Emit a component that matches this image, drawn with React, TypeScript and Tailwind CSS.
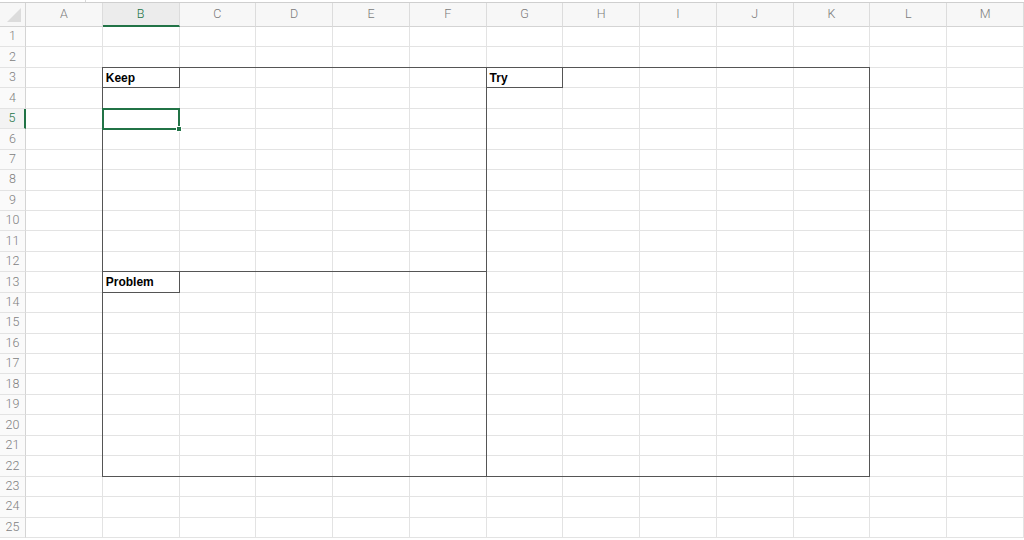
import React from 'react';

const columns = ['A', 'B', 'C', 'D', 'E', 'F', 'G', 'H', 'I', 'J', 'K', 'L', 'M'];
const rows = Array.from({ length: 25 }, (_, i) => i + 1);

const gridTemplate =
  'grid grid-cols-[26px_repeat(13,minmax(0,1fr))] grid-rows-[24px_repeat(25,20.45px)]';

function CornerCell() {
  return (
    <div className="bg-[#f7f7f7] border-r border-b border-[#d4d4d4] flex items-end justify-end pr-[4px] pb-[4px]">
      <svg width="14" height="14" viewBox="0 0 14 14">
        <polygon points="14,0 14,14 0,14" fill="#dcdcdc" />
      </svg>
    </div>
  );
}

function ColumnHeader({ label }: { label: string }) {
  const active = label === 'B';
  return (
    <div
      className={`flex items-center justify-center text-[12.5px] font-light border-r border-b ${
        active
          ? 'bg-[#ececec] text-[#217346] border-r-[#dcdcdc] border-b-2 border-b-[#217346]'
          : 'bg-[#f7f7f7] text-[#7a7a7a] border-[#dcdcdc] border-b-[#d4d4d4]'
      }`}
    >
      {label}
    </div>
  );
}

function RowHeader({ n }: { n: number }) {
  const active = n === 5;
  return (
    <div
      className={`flex items-center justify-center text-[12.5px] font-light border-b border-[#e3e3e3] ${
        active
          ? 'bg-[#f3f3f3] text-[#217346] border-r-2 border-r-[#217346]'
          : 'bg-[#fafafa] text-[#808080] border-r border-r-[#d4d4d4]'
      }`}
    >
      {n}
    </div>
  );
}

function Label({ text }: { text: string }) {
  return (
    <div className="-mt-px -ml-px border border-[#555] flex items-center pl-[3px] font-['Liberation_Sans',Arial,sans-serif] text-[12px] font-bold text-black leading-none">
      {text}
    </div>
  );
}

export default function App() {
  return (
    <div className="w-[1024px] h-[540px] overflow-hidden bg-white font-['Roboto','Liberation_Sans',sans-serif] select-none">
      {/* toolbar strip */}
      <div className="h-[3px] border-b border-[#cfcfcf] flex">
        <div className="w-[86px] border-r border-[#d8d8d8]" />
      </div>

      <div className="grid">
        {/* sheet cells */}
        <div className={`${gridTemplate} col-start-1 row-start-1`}>
          <CornerCell />
          {columns.map((c) => (
            <ColumnHeader key={c} label={c} />
          ))}
          {rows.map((r) => (
            <React.Fragment key={r}>
              <RowHeader n={r} />
              {columns.map((c) => (
                <div key={c + r} className="border-r border-b border-[#e3e3e3]" />
              ))}
            </React.Fragment>
          ))}
        </div>

        {/* borders and selection drawn over the cells */}
        <div className={`${gridTemplate} col-start-1 row-start-1 pointer-events-none`}>
          {/* Keep area B3:F12 */}
          <div className="col-start-3 col-end-8 row-start-4 row-end-14 -mt-px -ml-px border border-[#555]" />
          {/* Problem area B13:F22 */}
          <div className="col-start-3 col-end-8 row-start-14 row-end-24 -mt-px -ml-px border border-[#555]" />
          {/* Try area G3:K22 */}
          <div className="col-start-8 col-end-13 row-start-4 row-end-24 -mt-px -ml-px border border-[#555]" />

          <div className="col-start-3 col-end-4 row-start-4 row-end-5 grid">
            <Label text="Keep" />
          </div>
          <div className="col-start-3 col-end-4 row-start-14 row-end-15 grid">
            <Label text="Problem" />
          </div>
          <div className="col-start-8 col-end-9 row-start-4 row-end-5 grid">
            <Label text="Try" />
          </div>

          {/* selected cell B5 */}
          <div className="col-start-3 col-end-4 row-start-6 row-end-7 -mt-px -ml-px mb-[-1px] relative border-2 border-[#217346]">
            <div className="absolute -right-[4px] -bottom-[4px] w-[6px] h-[6px] bg-[#217346] border border-white" />
          </div>
        </div>
      </div>
    </div>
  );
}
